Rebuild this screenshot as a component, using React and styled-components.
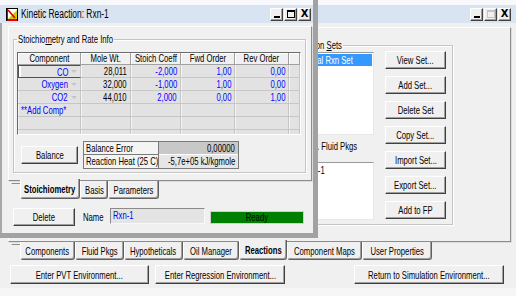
import React from "react";
import styled, { createGlobalStyle, css } from "styled-components";

const FONT = `"Liberation Sans", Arial, sans-serif`;

const Global = createGlobalStyle`
  html, body { margin: 0; padding: 0; background: #f0f0f0; }
  body { font-family: ${FONT}; font-size: 11px; color: #000; }
  * { box-sizing: border-box; }
`;

/* narrow text, as the condensed system font of the reference */
const T = styled.span`
  display: inline-block;
  white-space: nowrap;
  transform: scaleX(0.7);
  transform-origin: ${(p) => p.$o || "center"} center;
`;

const raised = css`
  border: 1px solid;
  border-color: #ffffff #404040 #404040 #ffffff;
  box-shadow: inset -1px -1px 0 #a0a0a0;
`;

const Desktop = styled.div`
  position: relative;
  width: 516px;
  height: 296px;
  overflow: hidden;
  background: #f0f0f0;
`;

/* ---------- main (background) window ---------- */
const MainWindow = styled.div`
  width: 516px;
  height: 296px;
  display: flex;
  flex-direction: column;
`;

const TitleBar = styled.div`
  height: 23px;
  flex: none;
  display: flex;
  align-items: center;
  padding: 5px ${(p) => p.$padRight || 5}px 0 6px;
  background: linear-gradient(#f7f9fc 0 5px, #d8e4f2 5px);
`;

const TitleIcon = styled.svg`
  width: 12px;
  height: 13px;
  flex: none;
`;

const TitleText = styled.span`
  margin-left: 3px;
  font-size: 12px;
  flex: 1;
  min-width: 0;
  white-space: nowrap;
`;

const Controls = styled.div`
  margin-left: auto;
  display: flex;
  gap: 1px;
`;

const CtrlButton = styled.div`
  width: 13px;
  height: 13px;
  background: #f0f0f0;
  ${raised};
  display: flex;
  align-items: center;
  justify-content: center;
  font-family: "DejaVu Sans", sans-serif;
  font-size: 10px;
  font-weight: bold;
  line-height: 1;
  color: #000;
`;

const MinGlyph = styled.span`
  width: 6px;
  height: 2px;
  background: #000;
  margin-top: 6px;
`;

const MaxGlyph = styled.span`
  width: 8px;
  height: 8px;
  border: 1px solid ${(p) => (p.$disabled ? "#c4c4c4" : "#000")};
  border-top-width: 2px;
`;

const Client = styled.div`
  flex: 1;
  display: flex;
  flex-direction: column;
  background: #f0f0f0;
`;

const TabPanel = styled.div`
  display: flex;
  margin: ${(p) => p.$margin};
  height: ${(p) => p.$height}px;
  border: 1px solid;
  border-color: #ffffff #8c8c8c #8c8c8c #ffffff;
  box-shadow: 1px 1px 0 #dcdcdc;
  padding: ${(p) => p.$padding};
  gap: 10px;
`;

const GroupBox = styled.fieldset`
  margin: 0;
  padding: ${(p) => p.$padding || "0"};
  border: 1px solid #c4c4c4;
  box-shadow: inset 1px 1px 0 #ffffff, 1px 1px 0 #ffffff;
  min-width: 0;
  flex: ${(p) => (p.$width ? "none" : "1")};
  width: ${(p) => (p.$width ? `${p.$width}px` : "auto")};
  display: flex;
  flex-direction: ${(p) => p.$dir || "row"};
`;

const Legend = styled.legend`
  padding: 0 1px;
  margin-left: ${(p) => p.$ml || 0}px;
  width: ${(p) => p.$w}px;
  line-height: 12px;
  font-size: 11px;
  white-space: nowrap;
  overflow: visible;
`;

const SetsColumn = styled.div`
  display: flex;
  flex-direction: column;
  width: 78px;
`;

const ListBox = styled.div`
  height: ${(p) => p.$height}px;
  margin-top: ${(p) => p.$mt || 0}px;
  background: #ffffff;
  border: 1px solid;
  border-color: #9a9a9a #e8e8e8 #e8e8e8 #9a9a9a;
  padding: 1px;
  overflow: hidden;
`;

const ListItem = styled.div`
  height: 12px;
  line-height: 12px;
  padding-left: ${(p) => (p.$selected ? 3 : 1)}px;
  white-space: nowrap;
  background: ${(p) => (p.$selected ? "#3399ff" : "transparent")};
  color: ${(p) => (p.$selected ? "#ffffff" : "#000")};
`;

const FieldLabel = styled.div`
  margin-top: 5px;
  height: 12px;
  line-height: 12px;
  white-space: nowrap;
`;

const ButtonColumn = styled.div`
  display: flex;
  flex-direction: column;
  gap: 7px;
  margin-left: 11px;
`;

const Button = styled.button`
  font-family: ${FONT};
  font-size: 11px;
  color: #000;
  background: #f0f0f0;
  ${raised};
  height: ${(p) => p.$h || 18}px;
  width: ${(p) => p.$w}px;
  padding: 0;
  flex: none;
  display: flex;
  align-items: center;
  justify-content: center;
  overflow: visible;
  margin-left: ${(p) => p.$ml || 0}px;
`;

const TabStrip = styled.div`
  display: flex;
  align-items: flex-start;
  padding-left: ${(p) => p.$pl}px;
  height: ${(p) => p.$h}px;
  flex: none;
`;

const TabNotch = styled.div`
  width: 9px;
  height: 2px;
  margin-left: -9px;
  margin-top: 1px;
  border-bottom: 1px solid #8c8c8c;
  border-left: 1px solid #ffffff;
`;

const Tab = styled.div`
  position: relative;
  width: ${(p) => p.$w}px;
  height: ${(p) => (p.$active ? 20 : 18)}px;
  margin-top: ${(p) => (p.$active ? -2 : 0)}px;
  background: #f0f0f0;
  border: 1px solid;
  border-top: none;
  border-color: #ffffff #606060 #606060 #ffffff;
  box-shadow: inset -1px -1px 0 #a0a0a0;
  border-radius: 0 0 3px 3px;
  display: flex;
  align-items: center;
  justify-content: center;
  font-weight: ${(p) => (p.$active ? "bold" : "normal")};
  z-index: ${(p) => (p.$active ? 2 : 1)};
`;

const ButtonRow = styled.div`
  display: flex;
  align-items: center;
  padding-left: ${(p) => p.$pl}px;
  margin-top: ${(p) => p.$mt}px;
`;

const BottomBand = styled.div`
  margin-top: auto;
  height: 8px;
  background: #f6f6f6;
`;

/* ---------- foreground dialog ---------- */
const Dialog = styled.div`
  position: absolute;
  left: 0;
  top: 0;
  width: 318px;
  height: 238px;
  display: flex;
  flex-direction: column;
  border-right: 5px solid #a2a2a2;
  border-bottom: 5px solid #a2a2a2;
  z-index: 5;
`;

const DialogBody = styled.div`
  flex: 1;
  display: flex;
  flex-direction: column;
  background: #f0f0f0;
  border-left: 2px solid #a8a8a8;
`;

const Grid = styled.div`
  margin-top: 7px;
  width: 284px;
  height: 84px;
  overflow: hidden;
  background: #e2e2e2;
  border: 1px solid;
  border-color: #6a6a6a #ffffff #ffffff #6a6a6a;
  display: grid;
  grid-template-columns: 63px 50px 50px 54px 54px 11px;
  grid-auto-rows: 13px;
  grid-template-rows: 12px;
`;

const HeadCell = styled.div`
  background: #f0f0f0;
  border-right: 1px solid #a0a0a0;
  border-bottom: 1px solid #a0a0a0;
  box-shadow: inset 1px 1px 0 #ffffff;
  display: flex;
  justify-content: center;
  line-height: 11px;
  overflow: hidden;
`;

const Cell = styled.div`
  border-right: 1px solid #c6c6c6;
  border-bottom: 1px solid #c6c6c6;
  box-shadow: inset 1px 0 0 #f4f4f4;
  line-height: 12px;
  padding: 0 3px;
  overflow: hidden;
  display: flex;
  align-items: center;
  justify-content: ${(p) => (p.$left ? "flex-start" : "flex-end")};
  color: ${(p) => (p.$blue ? "#0000ff" : "#000")};
  ${(p) =>
    p.$focus &&
    css`
      border: 1px solid #505050;
      border-right-color: #c6c6c6;
      box-shadow: inset 2px 0 0 #ffffff;
    `}
`;

const Arrow = styled.span`
  flex: none;
  width: 0;
  height: 0;
  margin-left: 3px;
  border-left: 3px solid transparent;
  border-right: 3px solid transparent;
  border-top: 3px solid #c4c4c4;
`;

const BalanceRow = styled.div`
  display: flex;
  align-items: center;
  margin-top: 6px;
  padding-left: 4px;
`;

const InfoTable = styled.div`
  display: grid;
  grid-template-columns: 75px 79px;
  grid-auto-rows: 13px;
  border: 1px solid #7a7a7a;
  margin-left: 5px;
`;

const InfoLabel = styled.div`
  background: #f4f4f4;
  border-right: 1px solid #7a7a7a;
  border-bottom: ${(p) => (p.$last ? "none" : "1px solid #7a7a7a")};
  padding-left: 2px;
  line-height: 12px;
  overflow: hidden;
`;

const InfoValue = styled.div`
  background: ${(p) => (p.$dark ? "#c8c8c8" : "#e6e6e6")};
  border-bottom: ${(p) => (p.$last ? "none" : "1px solid #ffffff")};
  display: flex;
  justify-content: flex-end;
  padding-right: 3px;
  line-height: 12px;
  overflow: hidden;
`;

const NameLabel = styled.span`
  margin-left: 8px;
  width: 27px;
  flex: none;
`;

const NameField = styled.div`
  width: 95px;
  height: 16px;
  margin-top: -2px;
  background: #e4e4e4;
  border: 1px solid;
  border-color: #8a8a8a #f8f8f8 #f8f8f8 #8a8a8a;
  color: #0000ff;
  padding-left: 2px;
  line-height: 13px;
  overflow: hidden;
`;

const Status = styled.div`
  width: 94px;
  height: 13px;
  margin-left: 5px;
  background: #008000;
  border: 1px solid #d0d0d0;
  display: flex;
  justify-content: center;
  line-height: 11px;
  color: #000;
`;

const DialogIcon = () => (
  <TitleIcon viewBox="0 0 12 13">
    <rect x="0.5" y="0.5" width="11" height="12" fill="#ffffff" stroke="#000" />
    <path d="M1 12 L11 12 L11 2 Z" fill="#c8d000" />
    <path d="M1 12 L11 12" stroke="#e00000" strokeWidth="2" />
    <path d="M2 2 L9 10" stroke="#e00000" strokeWidth="1.6" />
    <path d="M1 1 L1 12" stroke="#000" strokeWidth="1.5" />
  </TitleIcon>
);

const WindowControls = ({ maxDisabled }) => (
  <Controls>
    <CtrlButton>
      <MinGlyph />
    </CtrlButton>
    <CtrlButton>
      <MaxGlyph $disabled={maxDisabled} />
    </CtrlButton>
    <CtrlButton>X</CtrlButton>
  </Controls>
);

const rows = [
  ["CO", "28,011", "-2,000", "1,00", "0,00"],
  ["Oxygen", "32,000", "-1,000", "1,00", "0,00"],
  ["CO2", "44,010", "2,000", "0,00", "1,00"],
];

const mainTabs = [
  ["Components", 55],
  ["Fluid Pkgs", 49],
  ["Hypotheticals", 59],
  ["Oil Manager", 56],
  ["Reactions", 48, true],
  ["Component Maps", 75],
  ["User Properties", 70],
];

const setButtons = [
  "View Set...",
  "Add Set...",
  "Delete Set",
  "Copy Set...",
  "Import Set...",
  "Export Set...",
  "Add to FP",
];

export default function App() {
  return (
    <>
      <Global />
      <Desktop>
        <MainWindow>
          <TitleBar>
            <WindowControls maxDisabled />
          </TitleBar>
          <Client>
            <TabPanel $margin="4px 5px 0 8px" $height={215} $padding="11px 57px 16px 8px">
              <GroupBox />
              <GroupBox $width={166} $padding="0 6px 4px 8px">
                <Legend $w={50} $ml={-3}>
                  <T $o="left">
                    Reaction <u>S</u>ets
                  </T>
                </Legend>
                <SetsColumn>
                  <ListBox $height={83} $mt={1}>
                    <ListItem $selected>
                      <T $o="left">Global Rxn Set</T>
                    </ListItem>
                  </ListBox>
                  <FieldLabel>
                    <T $o="left">Assoc. Fluid Pkgs</T>
                  </FieldLabel>
                  <ListBox $height={58} $mt={10}>
                    <ListItem>
                      <T $o="left">Basis-1</T>
                    </ListItem>
                  </ListBox>
                </SetsColumn>
                <ButtonColumn>
                  {setButtons.map((b) => (
                    <Button key={b} $w={61}>
                      <T>{b}</T>
                    </Button>
                  ))}
                </ButtonColumn>
              </GroupBox>
            </TabPanel>
            <TabStrip $pl={20} $h={22}>
              <TabNotch />
              {mainTabs.map(([t, w, a]) => (
                <Tab key={t} $w={w} $active={a}>
                  <T>{t}</T>
                </Tab>
              ))}
            </TabStrip>
            <ButtonRow $pl={10} $mt={1}>
              <Button $w={139} $h={19}>
                <T>Enter PVT Environment...</T>
              </Button>
              <Button $w={130} $h={19} $ml={6}>
                <T>Enter Regression Environment...</T>
              </Button>
              <Button $w={150} $h={19} $ml={69}>
                <T>Return to Simulation Environment...</T>
              </Button>
            </ButtonRow>
            <BottomBand />
          </Client>
        </MainWindow>

        <Dialog>
          <TitleBar $padRight={2}>
            <DialogIcon />
            <TitleText>
              <T $o="left">Kinetic Reaction: Rxn-1</T>
            </TitleText>
            <WindowControls />
          </TitleBar>
          <DialogBody>
            <TabPanel $margin="3px 1px 0 6px" $height={155} $padding="6px 5px 7px 4px">
              <GroupBox $dir="column" $padding="0 0 3px 3px">
                <Legend $w={97} $ml={0}>
                  <T $o="left">
                    Stoichio<u>m</u>etry and Rate Info
                  </T>
                </Legend>
                <Grid>
                  {["Component", "Mole Wt.", "Stoich Coeff", "Fwd Order", "Rev Order", ""].map((h, i) => (
                    <HeadCell key={i}>
                      <T>{h}</T>
                    </HeadCell>
                  ))}
                  {rows.map((r, ri) =>
                    r
                      .map((v, ci) => (
                        <Cell key={`${ri}-${ci}`} $blue={ci !== 1} $focus={ri === 0 && ci === 0}>
                          <T $o="right">{v}</T>
                          {ci === 0 && <Arrow />}
                        </Cell>
                      ))
                      .concat(<Cell key={`${ri}-x`} />)
                  )}
                  <Cell $blue $left>
                    <T $o="left">**Add Comp*</T>
                  </Cell>
                  {Array.from({ length: 5 }).map((_, i) => (
                    <Cell key={`a${i}`} />
                  ))}
                  {Array.from({ length: 12 }).map((_, i) => (
                    <Cell key={`e${i}`} />
                  ))}
                </Grid>
                <BalanceRow>
                  <Button $w={57}>
                    <T>Balance</T>
                  </Button>
                  <InfoTable>
                    <InfoLabel>
                      <T $o="left">Balance Error</T>
                    </InfoLabel>
                    <InfoValue $dark>
                      <T $o="right">0,00000</T>
                    </InfoValue>
                    <InfoLabel $last>
                      <T $o="left">Reaction Heat (25 C)</T>
                    </InfoLabel>
                    <InfoValue $last>
                      <T $o="right">-5,7e+05 kJ/kgmole</T>
                    </InfoValue>
                  </InfoTable>
                </BalanceRow>
              </GroupBox>
            </TabPanel>
            <TabStrip $pl={18} $h={20}>
              <TabNotch />
              <Tab $w={60} $active>
                <T>Stoichiometry</T>
              </Tab>
              <Tab $w={28}>
                <T>Basis</T>
              </Tab>
              <Tab $w={51}>
                <T>Parameters</T>
              </Tab>
            </TabStrip>
            <ButtonRow $pl={11} $mt={7}>
              <Button $w={62}>
                <T>Delete</T>
              </Button>
              <NameLabel>
                <T $o="left">Name</T>
              </NameLabel>
              <NameField>
                <T $o="left">Rxn-1</T>
              </NameField>
              <Status>
                <T>Ready</T>
              </Status>
            </ButtonRow>
          </DialogBody>
        </Dialog>
      </Desktop>
    </>
  );
}
